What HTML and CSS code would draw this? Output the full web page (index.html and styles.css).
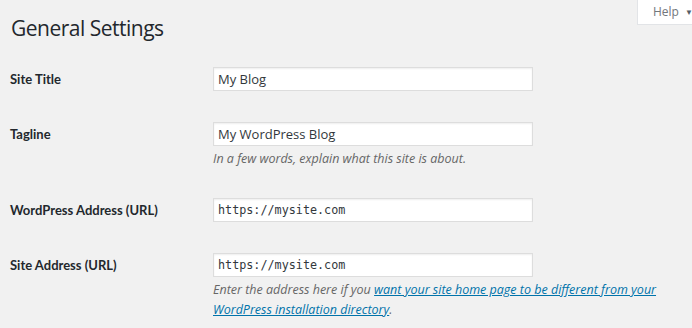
FILE: index.html
```html
<!DOCTYPE html>
<html lang="en">
<head>
  <meta charset="UTF-8" />
  <title>General Settings</title>
  <link rel="stylesheet" href="styles.css">
</head>
<body>

  <!-- help tab -->
  <div class="help-tab">Help <span class="arrow">&#9660;</span></div>

  <div class="wrap">
    <h1>General Settings</h1>

    <form class="settings">
      <div class="row">
        <label for="blogname">Site Title</label>
        <div class="field">
          <input type="text" id="blogname" value="My Blog">
        </div>
      </div>

      <div class="row">
        <label for="blogdescription">Tagline</label>
        <div class="field">
          <input type="text" id="blogdescription" value="My WordPress Blog">
          <p class="description">In a few words, explain what this site is about.</p>
        </div>
      </div>

      <div class="row">
        <label for="siteurl">WordPress Address (URL)</label>
        <div class="field">
          <input type="url" id="siteurl" class="code" value="https://mysite.com">
        </div>
      </div>

      <div class="row">
        <label for="home">Site Address (URL)</label>
        <div class="field">
          <input type="url" id="home" class="code" value="https://mysite.com">
          <p class="description">Enter the address here if you <a href="#">want your site home page to be different from your</a><br><a href="#">WordPress installation directory</a>.</p>
        </div>
      </div>
    </form>
  </div>

</body>
</html>
```

FILE: styles.css
```css
* { box-sizing: border-box; }
body {
  margin: 0;
  background: #f1f1f1;
  color: #23282d;
  font-family: 'Open Sans', sans-serif;
  font-size: 13px;
  overflow: hidden;
}
.help-tab {
  position: absolute;
  top: 0;
  right: 0;
  width: 55px;
  height: 25px;
  padding-left: 15px;
  background: #fff;
  border: 1px solid #e2e4e7;
  border-top: none;
  border-right: none;
  color: #72777c;
  font-size: 12px;
  line-height: 24px;
  white-space: nowrap;
}
.help-tab .arrow {
  font-size: 8px;
  color: #555d66;
  margin-left: 3px;
  vertical-align: 1px;
}
.wrap {
  padding-left: 10px;
}
h1 {
  margin: 0;
  padding: 14px 0 0 1px;
  height: 51px;
  font-size: 21px;
  font-weight: 400;
  line-height: 28px;
  letter-spacing: -0.5px;
  color: #23282d;
}
.row {
  display: grid;
  grid-template-columns: 203px 1fr;
  padding: 16px 0 15px;
}
.row label {
  font-family: 'Lato', sans-serif;
  font-weight: 700;
  line-height: 24px;
  font-size: 13px;
}
.field input {
  display: block;
  width: 320px;
  height: 24px;
  padding: 0 4px;
  border: 1px solid #ddd;
  box-shadow: inset 0 1px 2px rgba(0,0,0,0.07);
  background: #fff;
  color: #32373c;
  font-family: 'Open Sans', sans-serif;
  font-size: 13px;
}
.field input.code {
  font-family: 'DejaVu Sans Mono', monospace;
  font-size: 11.75px;
}
.description {
  margin: 3px 0 -2px;
  font-style: italic;
  color: #666;
  line-height: 20px;
  font-size: 12.5px;
}
.description a {
  color: #0073aa;
}
```
